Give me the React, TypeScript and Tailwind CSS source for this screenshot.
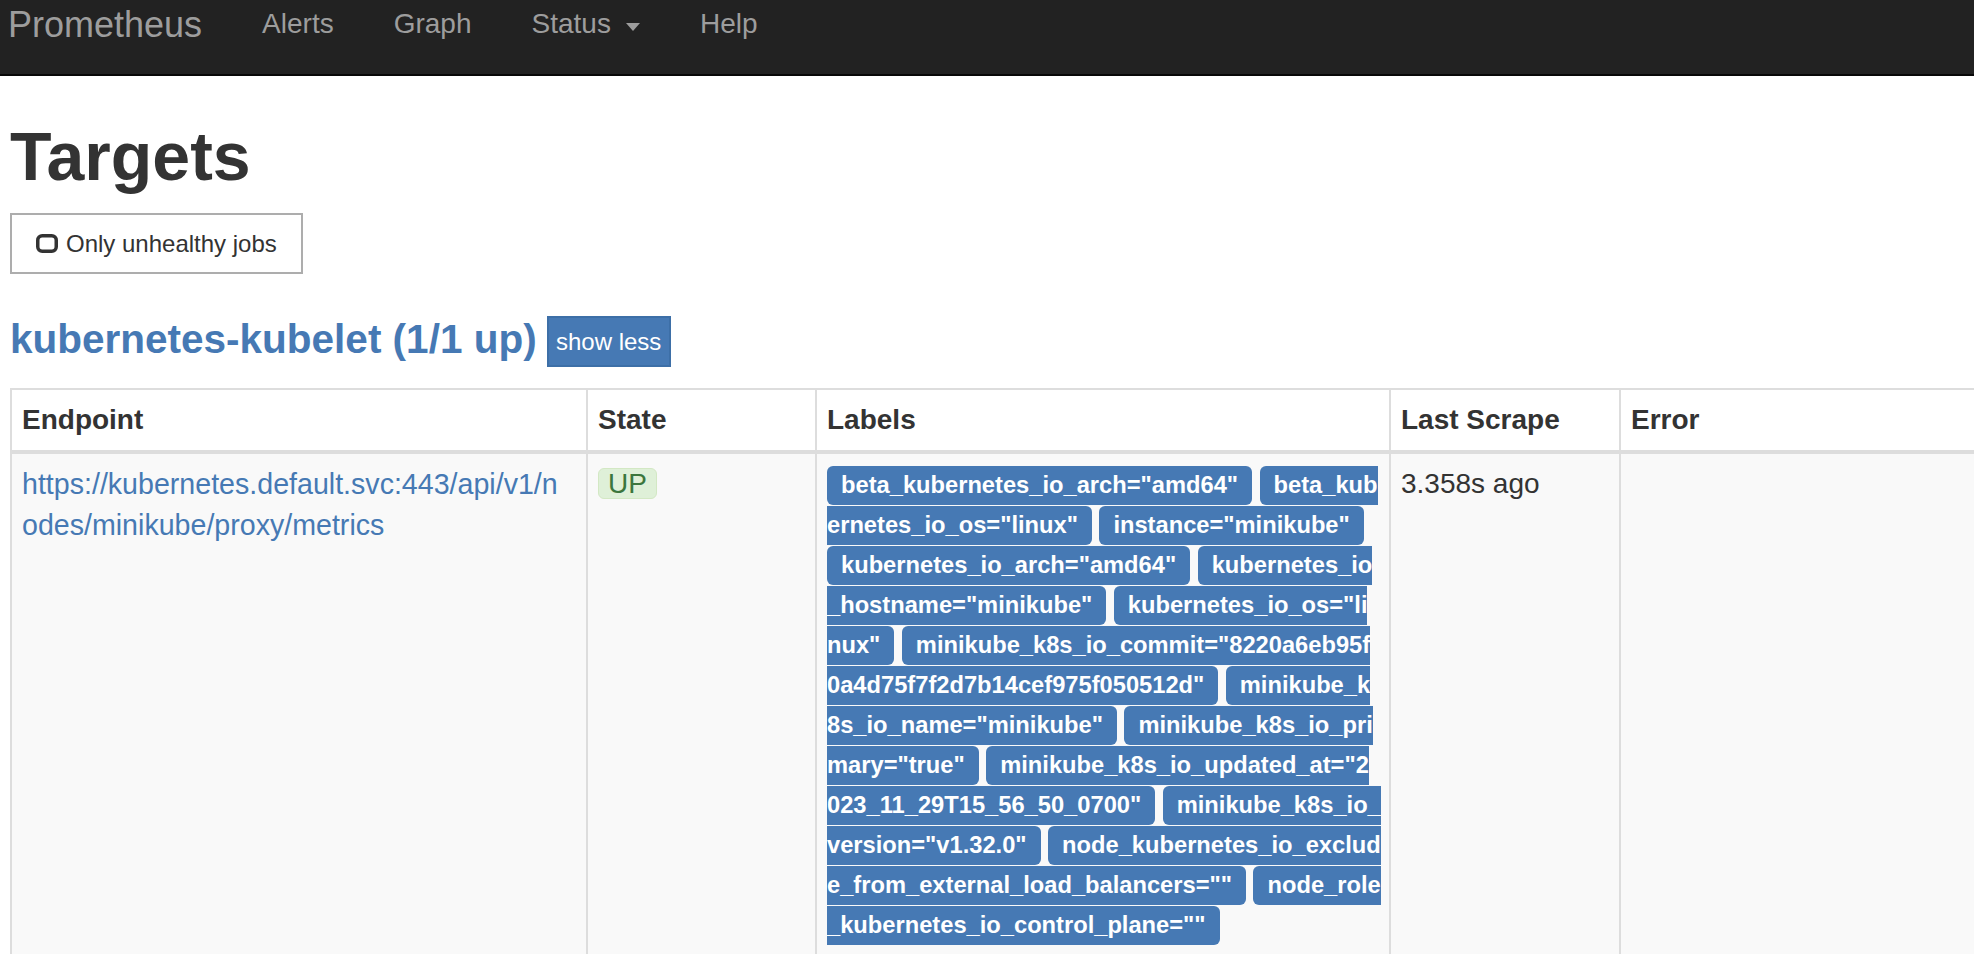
type Seg = { t: string; k: "full" | "start" | "end" };

const labelLines: Seg[][] = [
    [{ t: 'beta_kubernetes_io_arch="amd64"', k: "full" }, { t: "beta_kub", k: "start" }],
    [{ t: 'ernetes_io_os="linux"', k: "end" }, { t: 'instance="minikube"', k: "full" }],
    [{ t: 'kubernetes_io_arch="amd64"', k: "full" }, { t: "kubernetes_io", k: "start" }],
    [{ t: '_hostname="minikube"', k: "end" }, { t: 'kubernetes_io_os="li', k: "start" }],
    [{ t: 'nux"', k: "end" }, { t: 'minikube_k8s_io_commit="8220a6eb95f', k: "start" }],
    [{ t: '0a4d75f7f2d7b14cef975f050512d"', k: "end" }, { t: "minikube_k", k: "start" }],
    [{ t: '8s_io_name="minikube"', k: "end" }, { t: "minikube_k8s_io_pri", k: "start" }],
    [{ t: 'mary="true"', k: "end" }, { t: 'minikube_k8s_io_updated_at="2', k: "start" }],
    [{ t: '023_11_29T15_56_50_0700"', k: "end" }, { t: "minikube_k8s_io_", k: "start" }],
    [{ t: 'version="v1.32.0"', k: "end" }, { t: "node_kubernetes_io_exclud", k: "start" }],
    [{ t: 'e_from_external_load_balancers=""', k: "end" }, { t: "node_role", k: "start" }],
    [{ t: '_kubernetes_io_control_plane=""', k: "end" }],
];

const segClass = {
    full: "px-[14px] rounded-[6px]",
    start: "pl-[14px] rounded-l-[6px]",
    end: "pr-[14px] rounded-r-[6px]",
};

function Labels() {
    return (
        <div>
            {labelLines.map((line, i) => (
                <div key={i} className="flex h-[40px] items-start gap-[7.5px] whitespace-nowrap">
                    {line.map((s, j) => (
                        <span
                            key={j}
                            className={
                                "mt-[2px] h-[39px] bg-[#4679b4] text-[23.7px] font-bold leading-[38px] text-white " +
                                segClass[s.k]
                            }
                        >
                            {s.t}
                        </span>
                    ))}
                </div>
            ))}
        </div>
    );
}

export default function App() {
    return (
        <div className="h-screen w-full overflow-hidden bg-white font-['Liberation_Sans',Arial,sans-serif] text-[#333]">

            {/* NAVBAR */}
            <nav className="flex h-[76px] items-start border-b-2 border-[#080808] bg-[#222] pt-[4px] text-[#9d9d9d]">
                <span className="mt-[1px] pl-[8px] pr-[30px] text-[36px] leading-[40px]">Prometheus</span>
                <span className="px-[30px] text-[28px] leading-[40px]">Alerts</span>
                <span className="px-[30px] text-[28px] leading-[40px]">Graph</span>
                <span className="flex items-center px-[30px] text-[28px] leading-[40px]">
                    Status
                    <span className="ml-[15px] mt-[5px] h-0 w-0 border-x-[7px] border-t-[8px] border-x-transparent border-t-[#9d9d9d]" />
                </span>
                <span className="px-[30px] text-[28px] leading-[40px]">Help</span>
            </nav>

            {/* CONTENT */}
            <main className="pl-[10px]">
                <h1 className="mt-[40px] text-[68px] font-bold leading-[80px]">Targets</h1>

                <button className="mt-[17px] flex h-[61px] items-center gap-[8px] border-2 border-[#adadad] bg-white pl-[24px] pr-[24px] text-[24px] text-[#333]">
                    <svg width="22" height="19" viewBox="0 0 22 19">
                        <rect x="1.75" y="1.75" width="18.5" height="15.5" rx="4.5" fill="none" stroke="#333" strokeWidth="3.5" />
                    </svg>
                    Only unhealthy jobs
                </button>

                <div className="mt-[42px] flex items-start gap-[10px]">
                    <h2 className="text-[40.5px] font-bold leading-[46px] text-[#4679b4]">
                        kubernetes-kubelet (1/1 up)
                    </h2>
                    <button className="h-[51px] w-[124px] border-2 border-[#3d6fa7] bg-[#4679b4] text-[24px] text-white">
                        show less
                    </button>
                </div>

                <table className="mt-[21px] w-[2211px] table-fixed border-separate border-spacing-0 border-l-2 border-t-2 border-[#ddd] text-[28px] leading-[40px]">
                    <thead>
                        <tr>
                            <th className="w-[576px] border-b-4 border-r-2 border-[#ddd] p-[10px] text-left font-bold">Endpoint</th>
                            <th className="w-[229px] border-b-4 border-r-2 border-[#ddd] p-[10px] text-left font-bold">State</th>
                            <th className="w-[574px] border-b-4 border-r-2 border-[#ddd] p-[10px] text-left font-bold">Labels</th>
                            <th className="w-[230px] border-b-4 border-r-2 border-[#ddd] p-[10px] text-left font-bold">Last Scrape</th>
                            <th className="w-[600px] border-b-4 border-r-2 border-[#ddd] p-[10px] text-left font-bold">Error</th>
                        </tr>
                    </thead>
                    <tbody>
                        <tr className="bg-[#f9f9f9]">
                            <td className="border-b-2 border-r-2 border-[#ddd] p-[10px] align-top">
                                <a className="text-[28.6px] text-[#4679b4]">
                                    https://kubernetes.default.svc:443/api/v1/n
                                    <br />
                                    odes/minikube/proxy/metrics
                                </a>
                            </td>
                            <td className="border-b-2 border-r-2 border-[#ddd] p-[10px] align-top">
                                <span className="inline-block rounded-[6px] border-[1.5px] border-[#d3e8c4] bg-[#dff0d8] px-[9px] leading-[29px] text-[#3c763d]">
                                    UP
                                </span>
                            </td>
                            <td className="border-b-2 border-r-2 border-[#ddd] p-[10px] align-top">
                                <Labels />
                            </td>
                            <td className="border-b-2 border-r-2 border-[#ddd] p-[10px] align-top">3.358s ago</td>
                            <td className="border-b-2 border-r-2 border-[#ddd] p-[10px] align-top"></td>
                        </tr>
                    </tbody>
                </table>
            </main>

        </div>
    );
}
